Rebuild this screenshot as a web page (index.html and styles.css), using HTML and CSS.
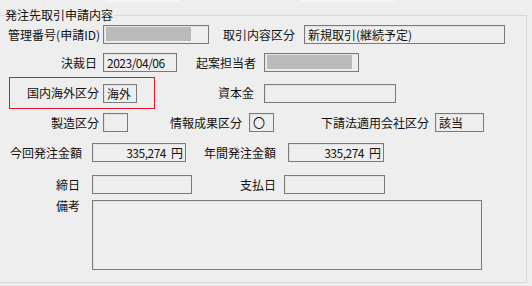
FILE: index.html
```html
<!DOCTYPE html>
<html lang="ja">
<head>
  <meta charset="UTF-8" />
  <title>発注先取引申請内容</title>
  <link rel="stylesheet" href="styles.css">
</head>
<body>
  <div class="stubs">
    <span class="stub stub-a"></span>
    <span class="stub stub-b"></span>
  </div>

  <fieldset class="group">
    <legend>発注先取引申請内容</legend>

    <div class="row r1">
      <span class="lbl w100">管理番号(申請ID)</span>
      <span class="fld ml3 w106"><i class="mask"></i></span>
      <span class="lbl w86">取引内容区分</span>
      <span class="fld ml9 w201">新規取引(継続予定)</span>
    </div>

    <div class="row r2">
      <span class="lbl w97">決裁日</span>
      <span class="fld digits ml6 w74">2023/04/06</span>
      <span class="lbl w79">起案担当者</span>
      <span class="fld ml8 w95"><i class="mask"></i></span>
    </div>

    <div class="row r3">
      <div class="flag">
        <span class="lbl w89">国内海外区分</span>
        <span class="fld ml4 w34">海外</span>
      </div>
      <span class="lbl w99">資本金</span>
      <span class="fld ml10 w132"></span>
    </div>

    <div class="row r4">
      <span class="lbl w99">製造区分</span>
      <span class="fld ml4 w25"></span>
      <span class="lbl w114">情報成果区分</span>
      <span class="fld ml7 w25">〇</span>
      <span class="lbl w155">下請法適用会社区分</span>
      <span class="fld ml6 w49">該当</span>
    </div>

    <div class="row r5">
      <span class="lbl w82">今回発注金額</span>
      <span class="fld num ml10 w94"><span class="digits">335,274</span><span class="yen">円</span></span>
      <span class="lbl w90">年間発注金額</span>
      <span class="fld num ml12 w96"><span class="digits">335,274</span><span class="yen">円</span></span>
    </div>

    <div class="row r6">
      <span class="lbl w80">締日</span>
      <span class="fld ml12 w100"></span>
      <span class="lbl w84">支払日</span>
      <span class="fld ml8 w101"></span>
    </div>

    <div class="row r7">
      <span class="lbl w80 top">備考</span>
      <span class="fld memo ml12 w390"></span>
    </div>
  </fieldset>
</body>
</html>
```

FILE: styles.css
```css
body {
  margin: 0;
  width: 532px;
  height: 286px;
  overflow: hidden;
  background: #eeeeee;
  color: #111;
  font-family: "Noto Sans CJK JP", sans-serif;
  font-size: 12px;
}
.stubs {
  display: flex;
  height: 2px;
}
.stub {
  background: #f6f6f6;
}
.stub-a {
  margin-left: 106px;
  width: 73px;
}
.stub-b {
  margin-left: 122px;
  width: 93px;
}
.group {
  box-sizing: border-box;
  width: 528px;
  height: 276px;
  margin: 5px 0 0 -1px;
  padding: 0;
  border: 1px solid #d8d8d8;
}
.group legend {
  margin-left: 4px;
  padding: 0 1px;
  line-height: 16px;
}
.row {
  display: flex;
  align-items: center;
  height: 19px;
}
.r1 { margin-top: 2px; }
.r2 { margin-top: 9px; }
.r3 { margin-top: 5px; height: 32px; }
.r4 { margin-top: 4px; }
.r5 { margin-top: 11px; }
.r6 { margin-top: 13px; }
.r7 { margin-top: 6px; height: 70px; align-items: flex-start; }

.lbl {
  flex: none;
  text-align: right;
  line-height: 16px;
  white-space: nowrap;
}
.lbl.top {
  margin-top: -2px;
}
.fld {
  flex: none;
  box-sizing: border-box;
  height: 19px;
  padding: 0 3px;
  border: 1px solid #7a7a7a;
  background: #eeeeee;
  box-shadow: inset 1px 1px 0 #e2e2e2;
  line-height: 17px;
  white-space: nowrap;
  overflow: hidden;
}
.fld.num {
  text-align: right;
  padding-right: 2px;
}
.digits {
  letter-spacing: -0.5px;
}
.yen {
  margin-left: 5px;
}
.fld.memo {
  height: 70px;
}
.mask {
  display: block;
  width: 85px;
  height: 14px;
  margin: 1px 0 0 -1px;
  background: #bababa;
}
.flag {
  flex: none;
  box-sizing: border-box;
  display: flex;
  align-items: center;
  width: 146px;
  height: 32px;
  margin-left: 9px;
  border: 1px solid #e0182d;
}

.w25 { width: 25px; }
.w34 { width: 34px; }
.w49 { width: 49px; }
.w74 { width: 74px; }
.w79 { width: 79px; }
.w80 { width: 80px; }
.w82 { width: 82px; }
.w84 { width: 84px; }
.w86 { width: 86px; }
.w89 { width: 89px; }
.w90 { width: 90px; }
.w94 { width: 94px; }
.w95 { width: 95px; }
.w96 { width: 96px; }
.w97 { width: 97px; }
.w99 { width: 99px; }
.w100 { width: 100px; }
.w101 { width: 101px; }
.w106 { width: 106px; }
.w114 { width: 114px; }
.w132 { width: 132px; }
.w155 { width: 155px; }
.w201 { width: 201px; }
.w390 { width: 390px; }

.ml3 { margin-left: 3px; }
.ml4 { margin-left: 4px; }
.ml6 { margin-left: 6px; }
.ml7 { margin-left: 7px; }
.ml8 { margin-left: 8px; }
.ml9 { margin-left: 9px; }
.ml10 { margin-left: 10px; }
.ml12 { margin-left: 12px; }
```
